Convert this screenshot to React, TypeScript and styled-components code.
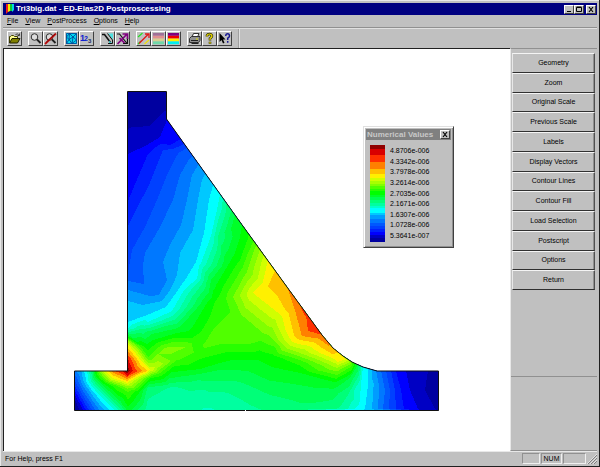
import React from "react";
import styled, { createGlobalStyle, css } from "styled-components";

const GlobalStyle = createGlobalStyle`
  * { box-sizing: border-box; }
  body { margin: 0; background: #c0c0c0; }
  button { font: inherit; color: inherit; cursor: default; }
`;

const raised = css`
  border: 1px solid;
  border-color: #fff #404040 #404040 #fff;
`;

const Frame = styled.div`
  display: flex;
  flex-direction: column;
  height: 100vh;
  padding: 3px 2px 1px 3px;
  background: #c0c0c0;
  border-right: 1px solid #202020;
  border-bottom: 1px solid #202020;
  box-shadow: inset 1px 1px #e8e8e8;
  font: 7px/10px "Liberation Sans", Arial, sans-serif;
  color: #000;
`;

const TitleBar = styled.header`
  display: flex;
  align-items: center;
  height: 12px;
  flex: none;
  padding: 0 1px 0 3px;
  gap: 2px;
  background: #000080;
  color: #fff;
`;

const Title = styled.h1`
  flex: 1;
  margin: 0;
  font-size: 8px;
  line-height: 12px;
  font-weight: bold;
  white-space: nowrap;
`;

const CaptionButton = styled.button<{ $gap?: boolean }>`
  ${raised}
  display: flex;
  width: 10px;
  height: 9px;
  padding: 0;
  margin-left: ${(p) => (p.$gap ? 2 : 0)}px;
  background: #c0c0c0;
  color: #000;
  svg { width: 8px; height: 7px; display: block; }
`;

const CaptionGroup = styled.div`
  display: flex;
`;

const MenuBar = styled.nav`
  display: flex;
  align-items: center;
  flex: none;
  height: 13px;
  padding-left: 4px;
  gap: 7px;
  border-bottom: 1px solid #909090;
`;

const MenuItem = styled.button`
  padding: 0;
  border: 0;
  background: none;
`;

const ToolBar = styled.div`
  display: flex;
  align-items: center;
  flex: none;
  height: 20px;
  padding-left: 4px;
  gap: 6px;
  border-top: 1px solid #e0e0e0;
`;

const ToolGroup = styled.div`
  display: flex;
`;

const ToolButton = styled.button`
  ${raised}
  width: 15px;
  height: 15px;
  padding: 0;
  background: #c0c0c0;
  svg { display: block; width: 13px; height: 13px; }
`;

const ToolEnd = styled.div`
  align-self: stretch;
  border-left: 1px solid #a0a0a0;
  border-right: 1px solid #e0e0e0;
`;

const Body = styled.div`
  display: flex;
  flex: 1;
  min-height: 0;
`;

const Canvas = styled.main`
  position: relative;
  flex: 1;
  min-width: 0;
  overflow: hidden;
  background: #fff;
  border-top: 1px solid #202020;
  border-left: 1px solid #202020;
`;

const Plot = styled.svg`
  display: block;
  width: 100%;
`;

const SideBar = styled.aside`
  display: flex;
  flex-direction: column;
  width: 87px;
  flex: none;
  border-left: 1px solid #e8e8e8;
  border-top: 1px solid #909090;
  border-bottom: 1px solid #909090;
`;

const SideButtons = styled.div`
  display: grid;
  grid-template-rows: repeat(12, 1fr);
  height: 328px;
  padding: 4px 2px 86px 1px;
  border-bottom: 1px solid #909090;
`;

const SideButton = styled.button`
  border: 1px solid;
  border-color: #f4f4f4 #505050 #303030 #e8e8e8;
  box-shadow: inset -1px 0 #909090;
  padding: 0;
  background: #c0c0c0;
`;

const StatusBar = styled.footer`
  display: flex;
  align-items: center;
  flex: none;
  height: 14px;
  gap: 1px;
  padding: 1px 0 1px 2px;
  border-top: 1px solid #e8e8e8;
`;

const StatusText = styled.span`
  flex: 1;
`;

const StatusCell = styled.span<{ $w: number }>`
  width: ${(p) => p.$w}px;
  height: 11px;
  line-height: 10px;
  text-align: center;
  border: 1px solid;
  border-color: #909090 #f0f0f0 #f0f0f0 #909090;
`;

const Grip = styled.svg`
  width: 10px;
  height: 10px;
`;

const Legend = styled.section`
  position: absolute;
  top: 77px;
  right: 56px;
  width: 91px;
  padding: 2px;
  background: #c0c0c0;
  border: 1px solid;
  border-color: #e0e0e0 #404040 #404040 #e0e0e0;
  box-shadow: inset 1px 1px #fff, inset -1px -1px #909090;
`;

const LegendTitle = styled.header`
  display: flex;
  align-items: center;
  justify-content: space-between;
  height: 11px;
  padding: 0 1px;
  background: #808080;
  color: #c8c8c8;
  font-size: 8px;
  font-weight: bold;
  white-space: nowrap;
`;

const LegendBody = styled.div`
  display: flex;
  gap: 5px;
  padding: 5px 4px 3px;
`;

const Scale = styled.svg`
  width: 15px;
  height: 97px;
`;

const Values = styled.ol`
  display: flex;
  flex-direction: column;
  justify-content: space-between;
  height: 96px;
  margin: 0;
  padding: 1px 0 0;
  list-style: none;
  li { line-height: 10px; }
`;

/* Colour bands, from the lowest value to the highest. */
const palette = [
  "#0000a0", "#0000c4", "#0000ff", "#0020ff", "#0040ff", "#0058ff", "#0078ff",
  "#009cff", "#00c8ff", "#00ffff", "#00ffcc", "#00ffa0", "#00ff78", "#00ff50",
  "#00ff28", "#00ff00", "#28ff00", "#50ff00", "#80ff00", "#a8ff00", "#d0ff00",
  "#fff000", "#ffc000", "#ff8000", "#ff3000", "#d80000", "#900000",
];

/* Height of each band in the legend. */
const bandHeights = [
  4, 3, 4, 3, 3, 3, 4, 4, 3, 5, 2, 3, 3, 3, 2, 5, 2, 3, 2, 3, 3, 5, 5, 7, 8, 6, 4,
];

type Node = [x: number, y: number, v: number];

/* Mesh nodes: x, y and nodal value in band units. */
const nodes: Node[] = [
  [127, 91, 0], [166, 91, 0], [128, 124, 0.8], [150, 124, 0.9], [167, 107, 0.8],
  [128, 154, 2], [147, 145, 2], [160, 137, 2], [167, 120, 2], [175, 131, 2.6],
  [128, 201, 3], [138, 177, 3], [148, 154, 3], [170, 145, 3], [181, 139, 3],
  [128, 226, 4], [141, 200, 4], [155, 170, 4], [163, 150, 4], [183, 144, 3.9],
  [128, 273, 5], [132, 250, 5], [145, 227, 5], [157, 200, 5], [167, 175, 5], [176, 152, 4.8], [187, 148, 5],
  [128, 281, 6], [144, 284, 6], [143, 265, 6], [145, 253, 6], [160, 227, 6], [173, 200, 6], [180, 175, 6], [186, 156, 5.6],
  [128, 290, 7], [150, 296, 7], [159, 295, 7], [167, 280, 7], [163, 262, 7], [170, 245, 7], [181, 225, 7], [187, 200, 7], [192, 175, 7], [194, 157, 6.2],
  [128, 301, 8], [143, 305, 8], [162, 301, 8], [177, 275, 8], [180, 253, 8], [193, 230, 8], [198, 200, 8], [202, 180, 8], [203, 170, 7.7],
  [128, 322, 9], [147, 315, 9], [166, 307, 9], [178, 290, 9], [196, 262, 9], [204, 233, 9], [209, 200, 9], [213, 185, 9],
  [128, 328, 10], [148, 322, 10], [172, 311, 10], [197, 279, 10], [211, 236, 10], [218, 205, 10], [220, 194, 10],
  [141, 329, 12], [176, 319, 12], [202, 284, 12], [218, 236, 12], [226, 204, 12],
  [129, 334, 13], [152, 334, 14], [182, 325, 14], [211, 280, 14], [231, 229, 14], [235, 215, 14],
  [153, 340, 15], [177, 333, 15], [207, 303, 15], [227, 267, 15], [240, 237, 15], [242, 225, 15],
  [240, 260, 16], [252, 239, 16.5], [215, 302, 16], [201, 332, 16],
  [226, 299, 17], [213, 330, 17], [222, 343, 17.1], [250, 343, 17.1], [244, 270, 17.4],
  [233, 297, 18], [258, 247, 18.5], [245, 294, 19.8], [240, 318, 17.6], [260, 335, 17.6], [268, 326, 19],
  [268, 260, 21], [253, 293, 21], [277, 312, 21], [292, 342, 21], [337, 362, 21], [346, 359, 21],
  [275, 271, 22], [268, 286, 22], [278, 297, 22], [294, 335, 22], [332, 354, 22], [338, 353, 22],
  [287, 287, 23], [302, 336, 23], [329, 346, 23], [295, 310, 23],
  [300, 306, 24], [308, 331, 24], [323, 335, 24], [312, 322, 24.5],
  [273, 323, 19.5], [288, 347, 19.5], [337, 368, 19], [270, 338, 17.8], [275, 347, 17],
  [300, 353, 19], [300, 362, 16.5], [337, 375, 17], [352, 366, 17], [300, 373, 15], [335, 384, 14.6],
  [333, 392, 13.6], [300, 390, 13.6], [300, 409, 12.7], [333, 409, 12.3],
  [357, 366, 14], [350, 378, 14], [348, 395, 12], [345, 409, 11.4],
  [363, 366, 10], [361, 385, 10], [355, 409, 10],
  [368, 367, 9], [368, 385, 9], [365, 409, 9],
  [372, 369, 8], [374, 385, 8], [372, 409, 8],
  [376, 371, 7], [379, 390, 7], [378, 409, 7],
  [381, 371, 6], [385, 390, 6], [383, 409, 6],
  [386, 371, 5], [390, 390, 5], [389, 409, 5],
  [391, 371, 4], [395, 390, 4], [396, 409, 4],
  [396, 371, 3], [401, 390, 3], [404, 409, 3],
  [406, 371, 2], [410, 390, 2], [418, 409, 2],
  [428, 371, 1], [425, 390, 1], [435, 409, 1], [439, 371, 0.3], [439, 390, 0.4], [439, 411, 0.9],
  [127, 371, 26.9], [133, 371, 25], [138, 371, 24], [143, 371, 23], [147, 371, 22], [150, 370, 21], [157, 366, 19.8],
  [128, 359, 25], [128, 355, 24], [128, 350, 22.5], [128, 346, 21.5], [128, 341, 19], [128, 337, 15.5],
  [135, 349, 20], [143, 363, 21], [142, 347, 16.4], [148, 356, 16.8], [148, 346, 15.4], [158, 354, 18],
  [167, 350, 18.6], [186, 347, 18], [205, 346, 17.2], [195, 340, 16.4], [160, 373, 17], [177, 359, 17.2], [145, 378, 18], [151, 378, 16],
  [127, 376, 25], [127, 379, 23], [127, 383, 21], [127, 386, 19], [128, 391, 17.2], [128, 400, 16], [128, 410, 14.5],
  [122, 371, 25], [115, 371, 24], [110, 371, 22.5], [104, 371, 20.5], [99, 371, 18], [95, 371, 15], [91, 371, 12],
  [87, 371, 10], [82, 371, 8.3], [74, 371, 6.5],
  [112, 379, 20.5], [105, 376, 19], [117, 386, 17], [104, 384, 15], [110, 394, 13.4], [120, 402, 13.8],
  [92, 381, 11.5], [97, 390, 10.6], [103, 397, 10.3], [115, 410, 10], [122, 410, 12],
  [86, 382, 8.8], [92, 393, 8.3], [103, 409, 8], [75, 382, 4.8], [84, 395, 5.5], [93, 410, 5.4],
  [75, 391, 3], [87, 410, 3.4], [75, 400, 1], [81, 410, 1.2], [74, 411, 0.2],
  [139, 393, 15], [148, 388, 12.8], [148, 399, 12], [147, 410, 11.6], [170, 400, 11.5], [170, 388, 11.9],
  [210, 410, 10.9], [212, 398, 11.4], [240, 410, 11.5], [170, 377, 14.2], [200, 385, 12.3], [200, 377, 13.4],
  [200, 369, 15], [200, 357, 16.2], [230, 355, 15.6], [230, 366, 14.4], [240, 378, 13.3], [240, 390, 12.4],
  [260, 358, 15.2], [270, 378, 14.2], [270, 395, 13], [275, 410, 12.3], [273, 356, 15.8],
];

type Tri = [number, number, number];

/* Delaunay triangulation by incremental insertion. */
function triangulate(pts: Node[]): Tri[] {
  const n = pts.length;
  const all: Node[] = [...pts, [-5000, -5000, 0], [5000, -5000, 0], [250, 9000, 0]];
  let tris: Tri[] = [[n, n + 1, n + 2]];
  const inside = (t: Tri, p: Node) => {
    const [a, b, c] = t.map((i) => [all[i][0] - p[0], all[i][1] - p[1]]);
    const sq = (q: number[]) => q[0] * q[0] + q[1] * q[1];
    const det =
      sq(a) * (b[0] * c[1] - c[0] * b[1]) -
      sq(b) * (a[0] * c[1] - c[0] * a[1]) +
      sq(c) * (a[0] * b[1] - b[0] * a[1]);
    const turn = (b[0] - a[0]) * (c[1] - a[1]) - (c[0] - a[0]) * (b[1] - a[1]);
    return turn > 0 ? det > 0 : det < 0;
  };
  for (let i = 0; i < n; i++) {
    const bad = tris.filter((t) => inside(t, all[i]));
    const edges = new Map<string, [number, number]>();
    bad.forEach((t) =>
      [[t[0], t[1]], [t[1], t[2]], [t[2], t[0]]].forEach(([a, b]) => {
        const key = Math.min(a, b) + "-" + Math.max(a, b);
        if (edges.has(key)) edges.delete(key);
        else edges.set(key, [a, b]);
      })
    );
    tris = tris.filter((t) => !bad.includes(t));
    edges.forEach(([a, b]) => tris.push([a, b, i]));
  }
  return tris.filter((t) => t.every((i) => i < n));
}

/* Part of a triangle whose value is at least the given level. */
function clipAbove(tri: Node[], level: number): string {
  const out: string[] = [];
  tri.forEach((a, i) => {
    const b = tri[(i + 1) % 3];
    if (a[2] >= level) out.push(`${a[0]} ${a[1]}`);
    if (a[2] >= level !== b[2] >= level) {
      const t = (level - a[2]) / (b[2] - a[2]);
      out.push(`${(a[0] + t * (b[0] - a[0])).toFixed(2)} ${(a[1] + t * (b[1] - a[1])).toFixed(2)}`);
    }
  });
  return out.length > 2 ? `M${out.join("L")}Z` : "";
}

const mesh = triangulate(nodes).map((t) => t.map((i) => nodes[i]));
const bands = palette.map((_, level) => mesh.map((t) => clipAbove(t, level)).join(""));

const outline =
  "M127.5 91.5H166.5V119L240 222L287 287L322 335L333 348L343 356L352 362L363 367L377 371H438.5V410.5H74.5V371H127.5Z";

function ContourPlot() {
  return (
    <Plot viewBox="4 49 506 402" role="img" aria-label="Contour fill">
      <clipPath id="body"><path d={outline} /></clipPath>
      <g clipPath="url(#body)" shapeRendering="crispEdges">
        <path d={outline} fill={palette[0]} />
        {bands.map((d, i) => <path key={i} d={d} fill={palette[i]} />)}
      </g>
      <path d={outline} fill="none" stroke="#101010" />
      <path d="M245 410.5h1" stroke="#fff" />
    </Plot>
  );
}

function LegendScale() {
  let y = 0;
  const total = bandHeights.reduce((a, b) => a + b, 0);
  return (
    <Scale viewBox={`0 0 15 ${total}`} preserveAspectRatio="none" shapeRendering="crispEdges" aria-hidden>
      {[...palette].reverse().map((c, i) => {
        const h = bandHeights[palette.length - 1 - i];
        y += h;
        return <rect key={i} y={y - h} width="15" height={h} fill={c} />;
      })}
    </Scale>
  );
}

const Ico = ({ children }: { children: React.ReactNode }) => (
  <svg viewBox="0 0 13 13" fill="none" aria-hidden>{children}</svg>
);

const lens = (
  <>
    <circle cx="5.5" cy="5" r="3.3" fill="#dcdcdc" stroke="#303030" />
    <path d="M8 7.500l3.500 3.500" stroke="#202020" strokeWidth="1.800" />
  </>
);

const stripes = (colors: string[]) =>
  colors.map((c, i) => <rect key={c} x="1" y={1 + i * 2.8} width="11" height="2.8" fill={c} />);

const tools: [string, React.ReactNode][][] = [
  [
    ["Open", <>
      <path d="M1.500 11V4.500h1l1-1h2l1 1h3V6" fill="#ffff90" stroke="#404000" />
      <path d="M1.500 11L4 6.500h8L9.500 11Z" fill="#808000" stroke="#202000" />
      <path d="M7.500 2.500q2-1.500 3.500.8M11.500 1.500v2h-2" stroke="#202020" strokeWidth=".8" />
    </>],
  ],
  [
    ["Zoom", lens],
    ["Zoom off", <>{lens}<path d="M1 12L12 1.500" stroke="#c01010" strokeWidth="1.800" /><path d="M2 10.500L11 2" stroke="#600000" strokeWidth=".6" /></>],
  ],
  [
    ["Mesh", <>
      <rect x="1" y="1" width="11" height="11" fill="#00d8f0" />
      <path d="M1.500 1.500h10v10h-10zM1.500 5l3-3.500L8 5l3.500-3.500M1.500 5l2.500 2.500L8 5l3.500 3M1.500 11.500L4 7.500l3 4 4.500-3.500M8 5l-1 6.500M4.500 1.500L4 7.500" stroke="#003c90" strokeWidth=".8" />
    </>],
    ["Numbers", <g fontFamily="Liberation Sans, sans-serif" fontWeight="bold">
      <text x="0" y="9" fontSize="9" fill="#1020d0">1</text>
      <text x="4" y="9" fontSize="7" fill="#1020d0">2</text>
      <text x="8" y="11" fontSize="6" fill="#203060">3</text>
    </g>],
  ],
  [
    ["Deformed", <>
      <path d="M7 1.500h5v6z" fill="#50e0e0" />
      <path d="M1 2.500h2.500L9.500 10.500" stroke="#101010" strokeWidth="1.600" />
      <path d="M6.500 1.500L11.500 8M11.500 8v3.500H7" stroke="#101010" strokeWidth="1" />
      <path d="M8 8.500v2.500h3z" fill="#40c0c0" />
    </>],
    ["Vectors off", <>
      <path d="M1 2h2.500L11 11.500M11.500 6v5.500H7" stroke="#101010" strokeWidth="1.200" />
      <path d="M1.500 12L11 2M6.500 2H11.500V7M3.500 6l5 5" stroke="#800080" strokeWidth="1.700" />
    </>],
  ],
  [
    ["Principal vectors", <>
      <path d="M1 5L5.500 1M1 12L4 9" stroke="#20e020" strokeWidth="1.200" />
      <path d="M2 11.500L11.500 2M8 2h4v4" stroke="#e01818" strokeWidth="1.300" />
      <path d="M7.500 12L12 8" stroke="#f0e000" strokeWidth="1.200" />
    </>],
    ["Contour lines", stripes(["#a07098", "#e09090", "#d8d090", "#70d8a8"])],
    ["Contour fill", stripes(["#800080", "#f00000", "#fff000", "#00f0f0"])],
  ],
  [
    ["Print", <>
      <path d="M4 5L5.500 1.500H11L9.500 5" fill="#fff" stroke="#303030" />
      <path d="M1.500 6.500l2-2H12v4l-1.500 2h-9z" fill="#909090" stroke="#303030" />
      <path d="M3 8.500h7M3.500 11.500h7" stroke="#202020" />
      <path d="M8 7h2" stroke="#e0e000" />
    </>],
    ["Help", <>
      <path d="M4 4.500V3.500Q4.500 2 6.500 2T9 4Q9 5 7 6.500V8.500M7 9.800v2" stroke="#303000" strokeWidth="2.600" />
      <path d="M4 4.500V3.500Q4.500 2 6.500 2T9 4Q9 5 7 6.500V8.300M7 10v1.500" stroke="#f0e000" strokeWidth="1.200" />
    </>],
    ["Context help", <>
      <path d="M1.500 1v9l2-2 1.500 3.500 1.500-.7L5 7.500h2.500z" fill="#000" />
      <path d="M7.800 4V3Q8 1.800 9.700 1.800T11.500 4Q11.500 5 9.700 6.200V8M9.700 9v1.700" stroke="#181890" strokeWidth="1.500" />
    </>],
  ],
];

const menus = ["File", "View", "PostProcess", "Options", "Help"];
const actions = [
  "Geometry", "Zoom", "Original Scale", "Previous Scale", "Labels", "Display Vectors",
  "Contour Lines", "Contour Fill", "Load Selection", "Postscript", "Options", "Return",
];
const values = [
  "4.8706e-006", "4.3342e-006", "3.7978e-006", "3.2614e-006", "2.7035e-006",
  "2.1671e-006", "1.6307e-006", "1.0728e-006", "5.3641e-007",
];

const Cross = () => (
  <svg viewBox="0 0 8 7" aria-hidden><path d="M2 1l4 5M6 1L2 6" stroke="#000" strokeWidth="1.200" /></svg>
);

export default function App() {
  return (
    <>
      <GlobalStyle />
      <Frame>
        <TitleBar>
          <svg width="8" height="10" viewBox="0 0 8 10" aria-hidden>
            <path d="M0 0h2v8l-2 2z" fill="#f02020" />
            <path d="M2 0h2v7l-2 1z" fill="#f0f000" />
            <path d="M4 0h2v7H4z" fill="#10c830" />
            <path d="M6 0h2v6l-2 2z" fill="#00d8e0" />
          </svg>
          <Title>Tri3big.dat - ED-Elas2D Postproscessing</Title>
          <CaptionGroup>
            <CaptionButton aria-label="Minimize"><svg viewBox="0 0 8 7"><path d="M2 5.500h4" stroke="#000" /></svg></CaptionButton>
            <CaptionButton aria-label="Maximize"><svg viewBox="0 0 8 7"><path d="M1.500 1.500h5v4h-5zM1.500 1h5" stroke="#000" fill="none" /></svg></CaptionButton>
            <CaptionButton aria-label="Close" $gap><Cross /></CaptionButton>
          </CaptionGroup>
        </TitleBar>
        <MenuBar>
          {menus.map((m) => <MenuItem key={m}><u>{m[0]}</u>{m.slice(1)}</MenuItem>)}
        </MenuBar>
        <ToolBar role="toolbar">
          {tools.map((group, i) => (
            <ToolGroup key={i}>
              {group.map(([label, icon]) => (
                <ToolButton key={label} aria-label={label}><Ico>{icon}</Ico></ToolButton>
              ))}
            </ToolGroup>
          ))}
          <ToolEnd />
        </ToolBar>
        <Body>
          <Canvas>
            <ContourPlot />
            <Legend aria-label="Numerical Values">
              <LegendTitle>
                Numerical Values
                <CaptionButton aria-label="Close values"><Cross /></CaptionButton>
              </LegendTitle>
              <LegendBody>
                <LegendScale />
                <Values>{values.map((v) => <li key={v}>{v}</li>)}</Values>
              </LegendBody>
            </Legend>
          </Canvas>
          <SideBar>
            <SideButtons>
              {actions.map((a) => <SideButton key={a}>{a}</SideButton>)}
            </SideButtons>
          </SideBar>
        </Body>
        <StatusBar>
          <StatusText>For Help, press F1</StatusText>
          <StatusCell $w={18} />
          <StatusCell $w={21}>NUM</StatusCell>
          <StatusCell $w={23} />
          <Grip viewBox="0 0 10 10" aria-hidden>
            <path d="M1 10L10 1M4 10l6-6M7 10l3-3" stroke="#808080" />
            <path d="M0 10L10 0M3 10l7-7M6 10l4-4" stroke="#f0f0f0" strokeWidth=".7" />
          </Grip>
        </StatusBar>
      </Frame>
    </>
  );
}
